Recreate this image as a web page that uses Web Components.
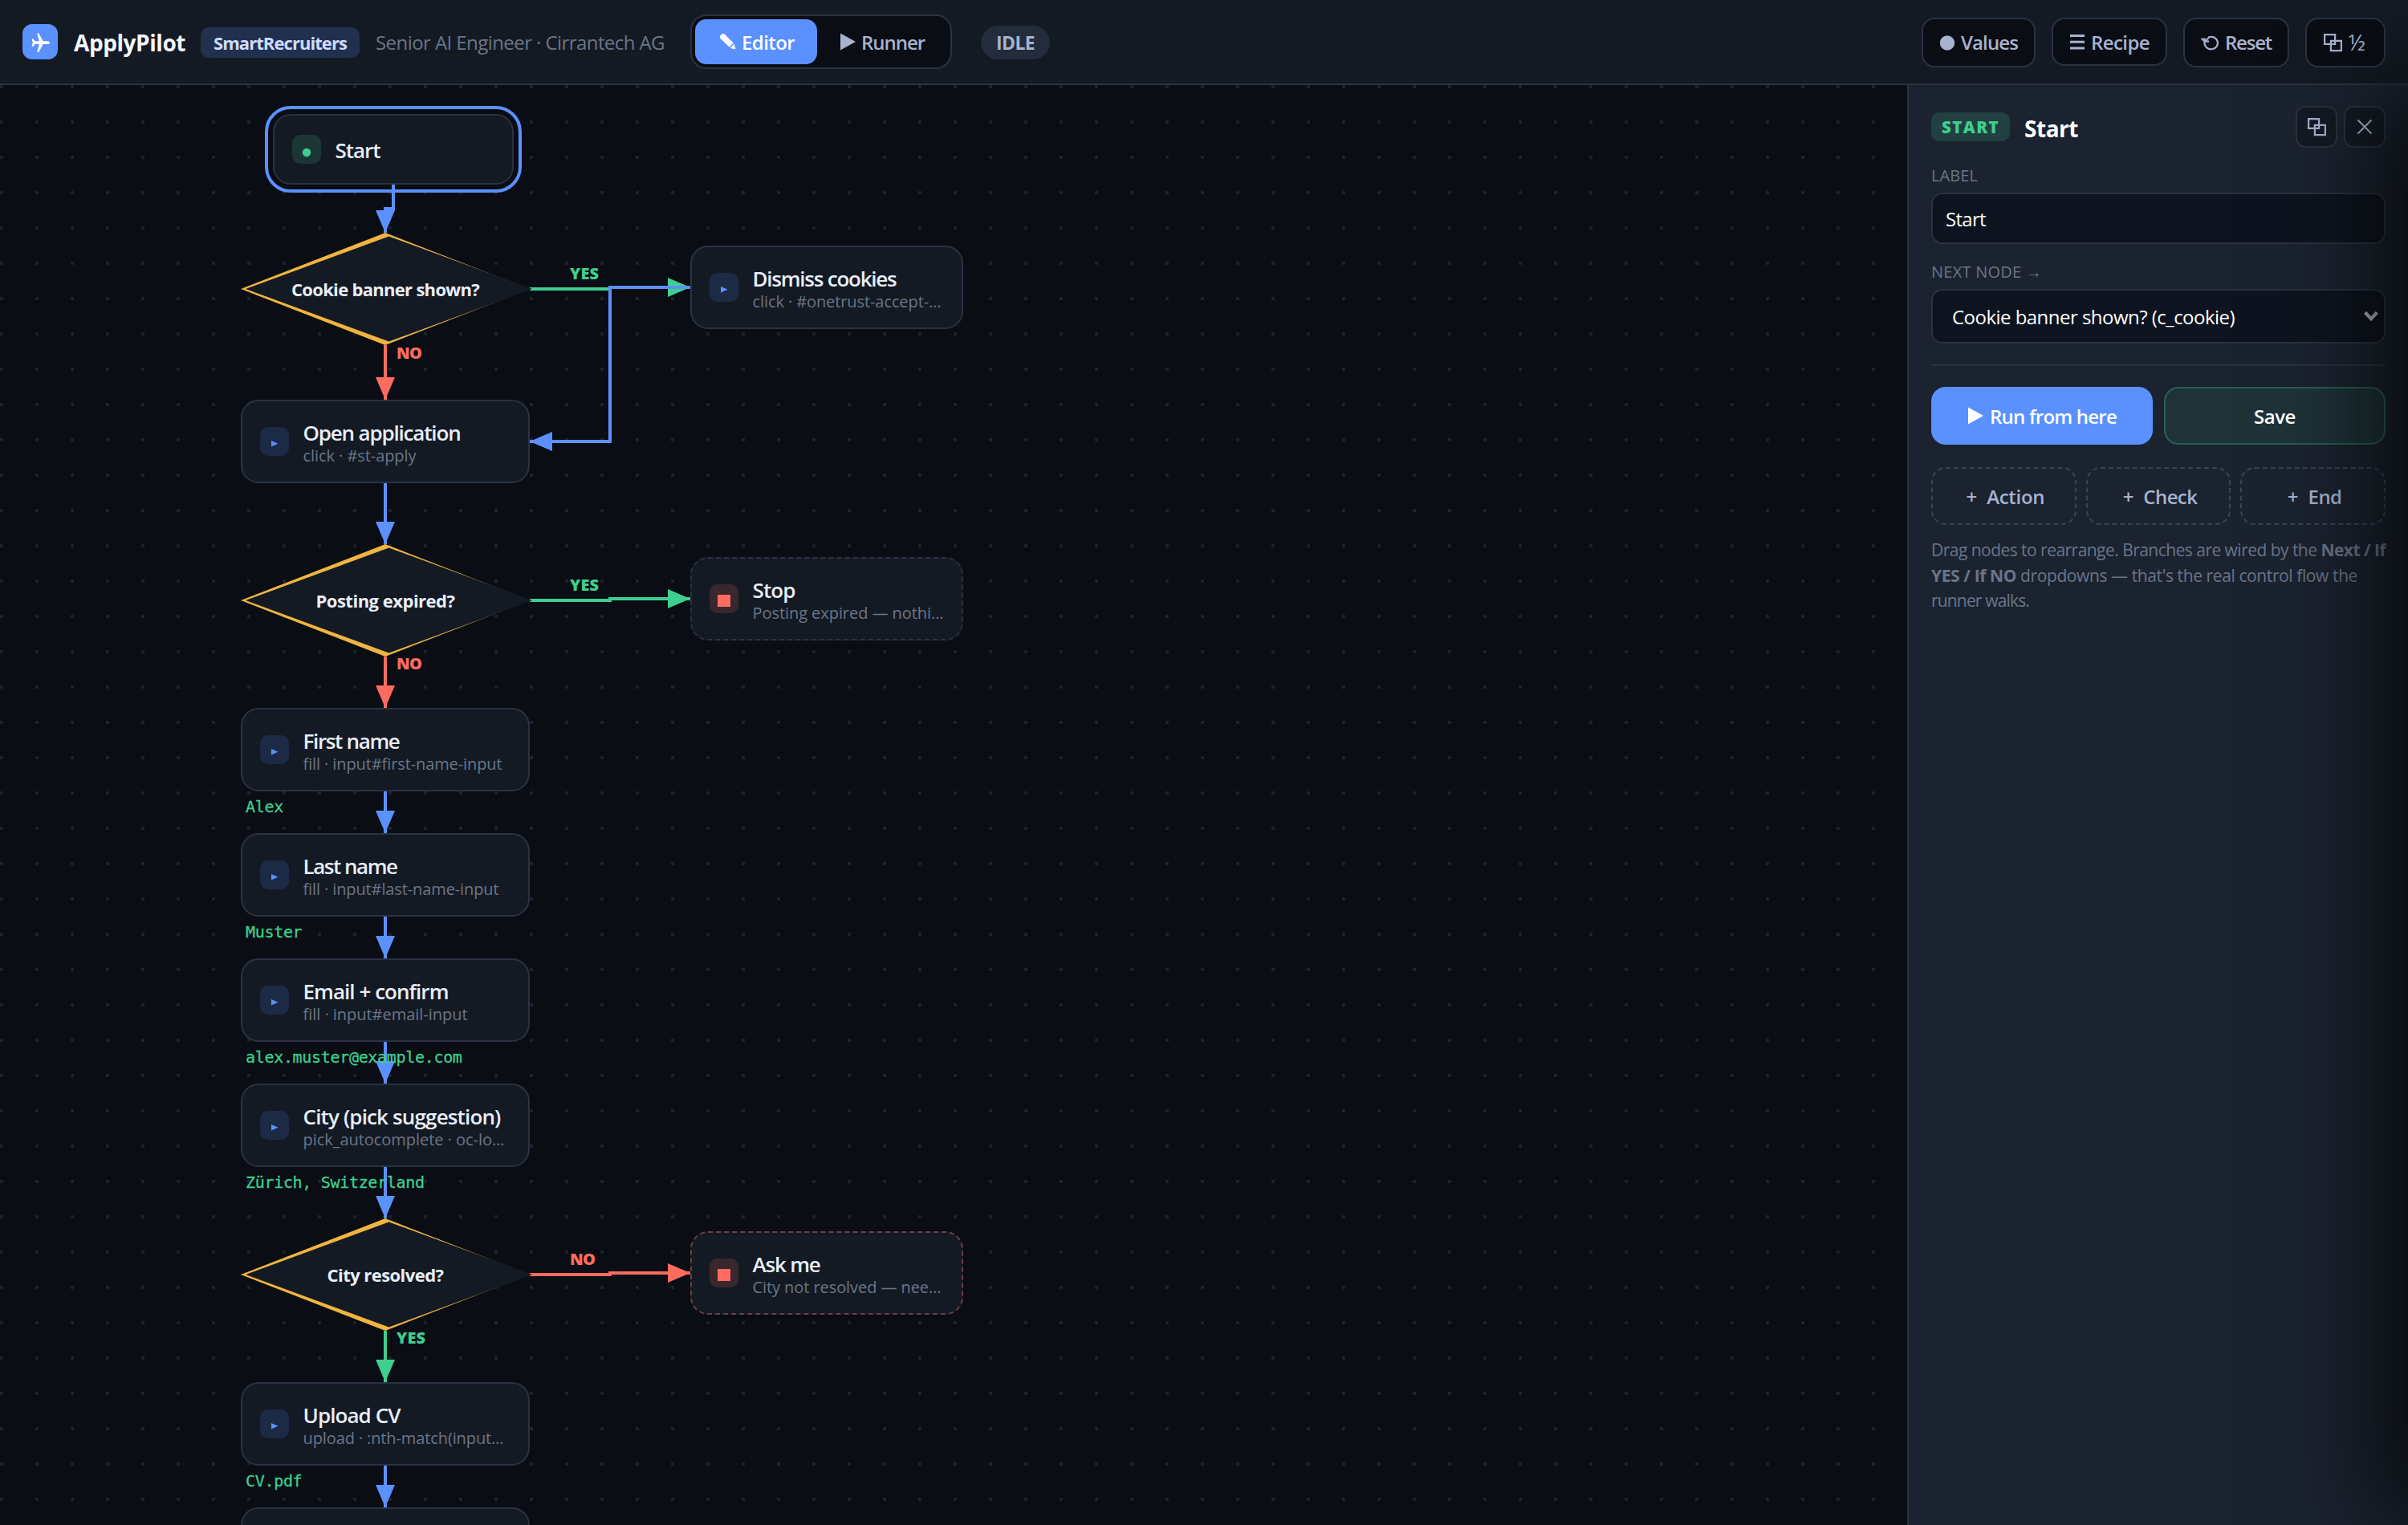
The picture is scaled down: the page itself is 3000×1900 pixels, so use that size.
<!DOCTYPE html>
<html lang="en">
<head>
<meta charset="utf-8">
<title>ApplyPilot</title>
<style>
  :root {
    --bg: #0a0d14;
    --surface: #141a23;
    --panel: #1b2330;
    --line: #2a3241;
    --text: #e9eef9;
    --soft: #a8b3cf;
    --muted: #6b7588;
    --blue: #5b91ff;
    --green: #3ecf8e;
    --red: #ff6b5e;
    --amber: #f0b440;
    --mono: "DejaVu Sans Mono", "Liberation Mono", monospace;
  }
  html, body { height: 100%; }
  body {
    margin: 0;
    overflow: hidden;
    background: var(--bg);
    color: var(--text);
    font-family: "Open Sans", "Noto Sans", "Liberation Sans", sans-serif;
  }
</style>
</head>
<body>
<pilot-app></pilot-app>

<script>
const ICONS = {
  plane: '<svg width="44" height="44" viewBox="0 0 44 44"><path fill="#fff" d="M34 24.2c0 1.1-1.2 1.9-3 1.9h-5.4L20.3 36h-2.1l2.6-9.9h-5.2l-2.3 3h-1.8l1.3-4.9-1.3-4.9h1.8l2.3 3h5.2l-2.6-9.9h2.1l5.3 9.9H31c1.8 0 3 .9 3 2z" transform="translate(0 -1)"/></svg>',
  pencil: '<svg width="24" height="24" viewBox="0 0 24 24"><path fill="currentColor" d="M3.4 4.2 5.6 2.3q1.8-1 3.4.5l2 1.8-5.2 5.6-2.3-2.3Q1.9 6 3.4 4.2z"/><path fill="currentColor" d="m9.8 3.8 9.8 9.6-4.9 5.4-9.8-9.5z"/><path fill="currentColor" d="m20.6 14.6 1.7 5.8q.1 1-.9.9l-5.7-1.3z"/></svg>',
  play: '<svg width="20" height="24" viewBox="0 0 20 24"><path fill="currentColor" d="M1 1.5 20 12 1 22.5z"/></svg>',
  dot: '<svg width="20" height="20" viewBox="0 0 20 20"><circle cx="10" cy="10.5" r="9.2" fill="currentColor"/></svg>',
  list: '<svg width="20" height="20" viewBox="0 0 20 20"><path fill="currentColor" d="M1 1h18v3H1zm0 7.8h18v3H1zm0 7.7h18v3H1z"/></svg>',
  reset: '<svg width="23" height="20" viewBox="0 0 23 20"><path fill="none" stroke="currentColor" stroke-width="2.2" d="M4.5 4.3V11a8.2 7.8 0 1 0 5.2-7.7M.6 4.7l4.3 4.1 5.6-5.6M4.8 8.6h5.4"/></svg>',
  windows: '<svg width="25" height="24" viewBox="0 0 25 24"><path fill="none" stroke="currentColor" stroke-width="2.2" d="M2.1 2.1h13v11.8h-13zM9.9 9.9h13v12.2h-13z"/></svg>',
  close: '<svg width="20" height="20" viewBox="0 0 20 20"><path fill="none" stroke="currentColor" stroke-width="2" d="m1.5 1.5 17 17m0-17-17 17"/></svg>',
  chevron: '<svg width="18" height="14" viewBox="0 0 18 14"><path fill="none" stroke="#b4b6ba" stroke-width="4.2" d="m1.6 2.2 7.4 8 7.4-8"/></svg>'
};

// Node kinds: start, action, check, end, ask. y is the top edge on the canvas.
const NODES = [
  { kind: 'start',  x: 340, y: 142,  label: 'Start', lw: 56 },
  { kind: 'check',  x: 300, y: 290,  label: 'Cookie banner shown?', lw: 234 },
  { kind: 'action', x: 860, y: 306,  label: 'Dismiss cookies', lw: 179, sub: 'click · #onetrust-accept-…', sw: 235 },
  { kind: 'action', x: 300, y: 498,  label: 'Open application', lw: 196, sub: 'click · #st-apply', sw: 141 },
  { kind: 'check',  x: 300, y: 678,  label: 'Posting expired?', lw: 173 },
  { kind: 'end',    x: 860, y: 694,  label: 'Stop', lw: 53, sub: 'Posting expired — nothi…', sw: 238 },
  { kind: 'action', x: 300, y: 882,  label: 'First name', lw: 120, sub: 'fill · input#first-name-input', sw: 248, value: 'Alex' },
  { kind: 'action', x: 300, y: 1038, label: 'Last name', lw: 117, sub: 'fill · input#last-name-input', sw: 244, value: 'Muster' },
  { kind: 'action', x: 300, y: 1194, label: 'Email + confirm', lw: 181, sub: 'fill · input#email-input', sw: 205, value: 'alex.muster@example.com' },
  { kind: 'action', x: 300, y: 1350, label: 'City (pick suggestion)', lw: 246, sub: 'pick_autocomplete · oc-lo…', sw: 251, value: 'Zürich, Switzerland' },
  { kind: 'check',  x: 300, y: 1518, label: 'City resolved?', lw: 145 },
  { kind: 'ask',    x: 860, y: 1534, label: 'Ask me', lw: 84, sub: 'City not resolved — nee…', sw: 235 },
  { kind: 'action', x: 300, y: 1722, label: 'Upload CV', lw: 121, sub: 'upload · :nth-match(input…', sw: 250, value: 'CV.pdf' },
  { kind: 'action', x: 300, y: 1878, label: '', lw: 0 }
];

const EDGES = [
  ['blue',  'M490 230V260H480V290'],
  ['green', 'M660 360H760V358H860'],
  ['red',   'M480 430V498'],
  ['blue',  'M860 358H760V550H660'],
  ['blue',  'M480 602V678'],
  ['green', 'M660 748H760V746H860'],
  ['red',   'M480 818V882'],
  ['blue',  'M480 986V1038'],
  ['blue',  'M480 1142V1194'],
  ['blue',  'M480 1298V1350'],
  ['blue',  'M480 1454V1518'],
  ['red',   'M660 1588H760V1586H860'],
  ['green', 'M480 1658V1722'],
  ['blue',  'M480 1826V1878']
];

const EDGE_LABELS = [
  ['green', 'YES', 710, 348], ['red', 'NO', 494, 447],
  ['green', 'YES', 710, 736], ['red', 'NO', 494, 834],
  ['red', 'NO', 710, 1576],   ['green', 'YES', 494, 1674]
];

class PilotApp extends HTMLElement {
  constructor() {
    super();
    this.attachShadow({ mode: 'open' }).innerHTML = `
      <style>
        :host {
          display: grid;
          grid-template: 106px 1fr / 1fr 624px;
          height: 100vh;
        }
        pilot-header { grid-column: 1 / -1; }
        /* drawer parked past the right edge, only its shadow shows */
        .drawer {
          position: fixed;
          top: 106px;
          bottom: 0;
          left: 100%;
          width: 600px;
          box-shadow: -40px 0 120px rgba(0, 0, 0, .72);
        }
      </style>
      <pilot-header></pilot-header>
      <flow-canvas></flow-canvas>
      <node-inspector></node-inspector>
      <div class="drawer"></div>
    `;
  }
}

class PilotHeader extends HTMLElement {
  constructor() {
    super();
    this.attachShadow({ mode: 'open' }).innerHTML = `
      <style>
        :host {
          display: flex;
          align-items: center;
          gap: 20px;
          box-sizing: border-box;
          padding: 0 28px;
          background: var(--surface);
          border-bottom: 2px solid var(--line);
        }
        .logo {
          width: 44px;
          height: 44px;
          border-radius: 12px;
          background: var(--blue);
        }
        .logo svg { display: block; }
        .brand { padding-top: 1px; font-size: 28px; font-weight: 700; color: #f3f6fd; }
        .chip {
          margin-top: 1px;
          padding: 0 16px;
          line-height: 38px;
          border-radius: 10px;
          background: #22304f;
          color: #cfdcff;
          font-size: 22px;
          font-weight: 700;
        }
        .job { padding-top: 1px; font-size: 24px; color: var(--muted); }
        .modes {
          display: flex;
          margin-left: 12px;
          padding: 4px;
          border: 2px solid var(--line);
          border-radius: 20px;
          background: var(--bg);
        }
        .mode {
          display: flex;
          align-items: center;
          gap: 7px;
          height: 56px;
          padding: 0 28px;
          border-radius: 14px;
          color: var(--soft);
          font-size: 24px;
          font-weight: 600;
        }
        .mode.on { gap: 6px; background: var(--blue); color: #fff; }
        .mode ui-text { padding-top: 1px; }
        .state {
          margin: 1px auto 0 16px;
          padding: 0 19px;
          line-height: 42px;
          border-radius: 21px;
          background: #232c3b;
          color: var(--soft);
          font-size: 23px;
          font-weight: 700;
        }
        .tools { display: flex; align-items: flex-start; gap: 20px; margin-top: 1px; }
        .half { font-size: 27px; font-weight: 400; }
      </style>
      <div class="logo">${ICONS.plane}</div>
      <ui-text class="brand" w="139">ApplyPilot</ui-text>
      <div class="chip" style="margin-left: -1px"><ui-text w="166">SmartRecruiters</ui-text></div>
      <ui-text class="job" w="360">Senior AI Engineer · Cirrantech AG</ui-text>
      <div class="modes">
        <div class="mode on">${ICONS.pencil}<ui-text w="66">Editor</ui-text></div>
        <div class="mode">${ICONS.play}<ui-text w="79">Runner</ui-text></div>
      </div>
      <div class="state"><ui-text w="48">IDLE</ui-text></div>
      <div class="tools">
        <tool-button icon="dot"><ui-text w="71">Values</ui-text></tool-button>
        <tool-button icon="list" short><ui-text w="73">Recipe</ui-text></tool-button>
        <tool-button icon="reset"><ui-text w="58">Reset</ui-text></tool-button>
        <tool-button icon="windows"><ui-text class="half" w="24">½</ui-text></tool-button>
      </div>
    `;
  }
}

class ToolButton extends HTMLElement {
  constructor() {
    super();
    this.attachShadow({ mode: 'open' });
  }

  connectedCallback() {
    this.shadowRoot.innerHTML = `
      <style>
        :host {
          display: flex;
          align-items: center;
          gap: 7px;
          box-sizing: border-box;
          height: 62px;
          padding: 0 20px;
          border: 2px solid var(--line);
          border-radius: 16px;
          background: var(--bg);
          color: var(--soft);
          font-size: 24px;
          font-weight: 600;
        }
        :host([short]) { height: 60px; }
        :host([short]) ::slotted(*) { padding-top: 1px; }
        :host([square]) {
          justify-content: center;
          width: 52px;
          height: 52px;
          padding: 0;
          border-radius: 12px;
          background: #141a24;
        }
      </style>
      ${ICONS[this.getAttribute('icon')]}<slot></slot>
    `;
  }
}

class FlowCanvas extends HTMLElement {
  constructor() {
    super();
    const edges = EDGES.map(([color, d]) =>
      `<path d="${d}" stroke="var(--${color})" marker-end="url(#arrow-${color})"/>`).join('');
    const markers = ['blue', 'green', 'red'].map(color => `
      <marker id="arrow-${color}" markerUnits="userSpaceOnUse" markerWidth="28" markerHeight="24"
              refX="28" refY="12" orient="auto">
        <path d="M0 0 28 12 0 24z" fill="var(--${color})"/>
      </marker>`).join('');
    const labels = EDGE_LABELS.map(([color, text, x, y]) =>
      `<text x="${x}" y="${y - 106}" fill="var(--${color})" textLength="${text === 'YES' ? 36 : 32}">${text}</text>`).join('');

    this.attachShadow({ mode: 'open' }).innerHTML = `
      <style>
        :host {
          display: block;
          position: relative;
          overflow: hidden;
          background: radial-gradient(circle at 2px 2px, #1d232e 2px, transparent 2.4px) 0 0 / 44px 44px;
        }
        svg { position: absolute; inset: 0; width: 100%; height: 100%; }
        .edges path { fill: none; stroke-width: 4; }
        marker path { stroke: none; }
        text { font-size: 20px; font-weight: 800; }
        flow-node { position: absolute; }
      </style>
      <svg>
        <defs>${markers}</defs>
        <g class="edges" transform="translate(0 -106)">${edges}</g>
        ${labels}
      </svg>
    `;

    for (const node of NODES) {
      const el = document.createElement('flow-node');
      el.data = node;
      el.style.left = node.x + 'px';
      el.style.top = node.y - 106 + 'px';
      this.shadowRoot.appendChild(el);
    }
  }
}

class FlowNode extends HTMLElement {
  constructor() {
    super();
    this.attachShadow({ mode: 'open' });
  }

  connectedCallback() {
    // set before upgrade as a plain property
    const node = this.data;
    this.setAttribute('kind', node.kind);
    this.shadowRoot.innerHTML = `
      <style>
        :host { display: block; width: 360px; }
        :host([kind=start]) { width: 300px; }
        :host([kind=end]), :host([kind=ask]) { width: 340px; }
        .card {
          display: flex;
          align-items: center;
          gap: 17.5px;
          box-sizing: border-box;
          height: 104px;
          padding: 0 22px;
          border: 2px solid var(--line);
          border-radius: 22px;
          background: var(--surface);
        }
        :host([kind=start]) .card {
          height: 88px;
          outline: 4px solid var(--blue);
          outline-offset: 6px;
        }
        :host([kind=end]) .card { border-style: dashed; }
        :host([kind=ask]) .card { border: 2px dashed #6f3d43; }
        .icon {
          flex: none;
          width: 36px;
          height: 36px;
          border-radius: 10px;
          background: #1d2a45;
        }
        .icon svg { display: block; }
        :host([kind=start]) .icon { background: #1c3635; }
        :host([kind=end]) .icon, :host([kind=ask]) .icon { background: #3a272e; }
        .texts { display: flex; flex-direction: column; padding-top: 1px; }
        .sub { margin: 1px 0 -3px; font-size: 20px; line-height: 26px; font-weight: 500; color: var(--muted); }
        .title { font-size: 26px; line-height: 30px; font-weight: 600; }
        .value {
          position: absolute;
          top: 110px;
          left: 6px;
          font: 20px/26px var(--mono);
          letter-spacing: -.32px;
          white-space: pre;
          color: var(--green);
          -webkit-text-stroke: .3px var(--green);
        }
        .check {
          display: grid;
          place-items: center;
          width: 364px;
          height: 140px;
        }
        .check > * { grid-area: 1 / 1; }
        .check ui-text { margin: -1px 4px 0 0; font-size: 22px; line-height: 30px; font-weight: 700; }
      </style>
      ${node.kind === 'check' ? this._check(node) : this._card(node)}
    `;
    if (node.kind === 'action' && node.x > 700) this.style.width = '340px';
  }

  _check(node) {
    return `
      <div class="check">
        <svg width="364" height="140" viewBox="0 0 364 140">
          <path fill="var(--amber)" d="M0 70 180 0 360 70 180 140z"/>
          <path fill="var(--surface)" d="M6 70 184.500 4.500 363 70 184.500 135.500z"/>
        </svg>
        <ui-text w="${node.lw}">${node.label}</ui-text>
      </div>
    `;
  }

  _card(node) {
    const glyphs = {
      start: '<circle cx="18" cy="22" r="5.200" fill="var(--green)"/>',
      action: '<path d="M14 17v7.500l8.500-3.750z" fill="var(--blue)"/>',
      end: '<path d="M10 13h16v15H10z" fill="var(--red)"/>'
    };
    const glyph = glyphs[node.kind] || glyphs.end;
    return `
      <div class="card">
        <div class="icon"><svg width="36" height="36">${glyph}</svg></div>
        <div class="texts">
          ${node.label ? `<ui-text class="title" w="${node.lw}">${node.label}</ui-text>` : ''}
          ${node.sub ? `<ui-text class="sub" w="${node.sw}">${node.sub}</ui-text>` : ''}
        </div>
      </div>
      ${node.value ? `<div class="value">${node.value}</div>` : ''}
    `;
  }
}

class NodeInspector extends HTMLElement {
  constructor() {
    super();
    this.attachShadow({ mode: 'open' }).innerHTML = `
      <style>
        :host {
          display: flex;
          flex-direction: column;
          box-sizing: border-box;
          padding: 26px 28px;
          border-left: 2px solid var(--line);
          background: var(--panel);
        }
        .head { display: flex; align-items: center; gap: 8px; height: 52px; margin-bottom: 21px; }
        .badge {
          padding: 0 13px;
          line-height: 36px;
          border-radius: 10px;
          background: #224041;
          color: var(--green);
          font-size: 20.5px;
          font-weight: 800;
        }
        .badge ui-text { padding-top: 1px; line-height: 35px; }
        .name { margin: 3px auto 0 10px; font-size: 28px; font-weight: 700; color: #fff; }
        .label { font-size: 20px; line-height: 28px; margin-bottom: 7px; color: var(--muted); }
        .field {
          display: flex;
          align-items: center;
          justify-content: space-between;
          box-sizing: border-box;
          height: 64px;
          margin-bottom: 21px;
          padding: 0 16px;
          border: 2px solid var(--line);
          border-radius: 14px;
          background: #0e141f;
          color: #fff;
          font-size: 24px;
        }
        .field.select { height: 68px; margin-bottom: 26px; padding: 0 7px 0 24px; }
        .rule { height: 2px; margin-bottom: 26px; background: var(--line); }
        .row { display: grid; grid-template-columns: 1fr 1fr; gap: 14px; margin-bottom: 28px; }
        .row.add { grid-template-columns: repeat(3, 1fr); gap: 12px; margin-bottom: 16px; }
        .btn {
          display: flex;
          align-items: center;
          justify-content: center;
          gap: 8px;
          box-sizing: border-box;
          height: 72px;
          border-radius: 18px;
          color: #fff;
          font-size: 24px;
          font-weight: 600;
        }
        .btn ui-text { padding-top: 1px; }
        .run { background: var(--blue); }
        .save { border: 2px solid #28604f; background: #1f3238; }
        .add .btn { gap: 12px; padding-left: 4px; border: 2px dashed #3a4355; color: var(--soft); }
        .help { font-size: 21px; line-height: 31.6px; color: var(--muted); }
        .help ui-text { display: block; }
      </style>
      <div class="head">
        <div class="badge"><ui-text w="72">START</ui-text></div>
        <ui-text class="name" w="67">Start</ui-text>
        <tool-button square icon="windows"></tool-button>
        <tool-button square icon="close"></tool-button>
      </div>
      <div class="label"><ui-text w="58">LABEL</ui-text></div>
      <div class="field"><ui-text w="50">Start</ui-text></div>
      <div class="label"><ui-text w="138">NEXT NODE →</ui-text></div>
      <div class="field select"><ui-text w="352">Cookie banner shown? (c_cookie)</ui-text>${ICONS.chevron}</div>
      <div class="rule"></div>
      <div class="row">
        <div class="btn run">${ICONS.play}<ui-text w="158">Run from here</ui-text></div>
        <div class="btn save"><ui-text w="52">Save</ui-text></div>
      </div>
      <div class="row add">
        <div class="btn"><span>+</span><ui-text w="72">Action</ui-text></div>
        <div class="btn"><span>+</span><ui-text w="67">Check</ui-text></div>
        <div class="btn"><span>+</span><ui-text w="42">End</ui-text></div>
      </div>
      <div class="help">
        <ui-text w="566">Drag nodes to rearrange. Branches are wired by the <b>Next / If</b></ui-text>
        <ui-text w="531"><b>YES / If NO</b> dropdowns — that's the real control flow the</ui-text>
        <ui-text w="122">runner walks.</ui-text>
      </div>
    `;
  }
}

// One line of text, tracked in or out to fill the width given in w.
class UiText extends HTMLElement {
  constructor() {
    super();
    this.attachShadow({ mode: 'open' }).innerHTML = `
      <style>
        :host { display: inline-block; white-space: nowrap; }
        span { display: inline-block; }
      </style>
      <span><slot></slot></span>
    `;
  }

  connectedCallback() {
    const width = Number(this.getAttribute('w'));
    const span = this.shadowRoot.querySelector('span');
    const natural = span.getBoundingClientRect().width;
    const count = this.textContent.length;
    this.style.width = width + 'px';
    span.style.letterSpacing = (width - natural) / count + 'px';
  }
}

customElements.define('pilot-app', PilotApp);
customElements.define('pilot-header', PilotHeader);
customElements.define('tool-button', ToolButton);
customElements.define('flow-canvas', FlowCanvas);
customElements.define('flow-node', FlowNode);
customElements.define('node-inspector', NodeInspector);
customElements.define('ui-text', UiText);
</script>
</body>
</html>
